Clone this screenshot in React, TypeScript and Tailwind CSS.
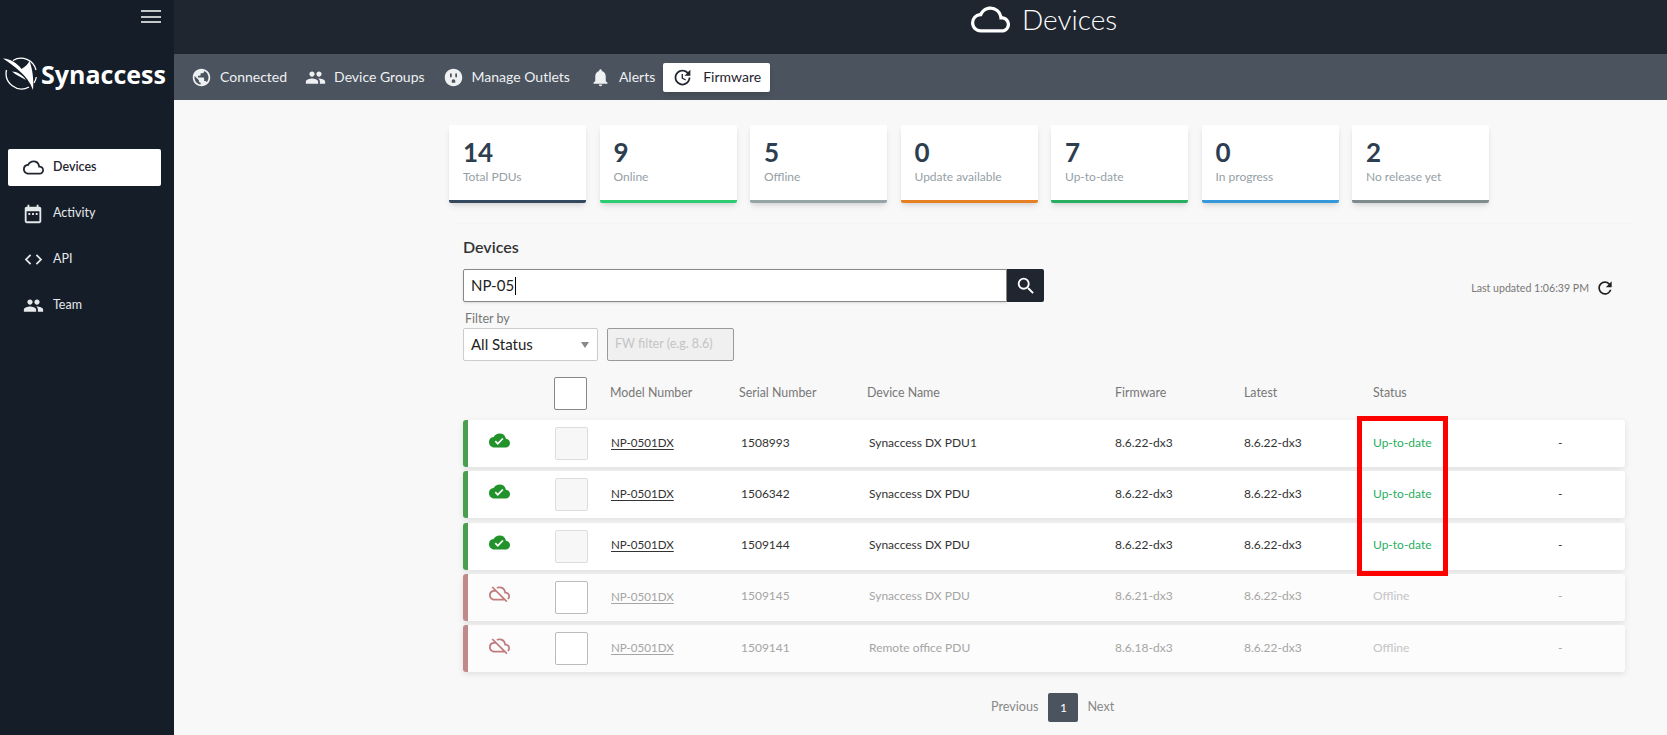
import {
  MdCloudDone,
  MdCloudQueue,
  MdCode,
  MdDateRange,
  MdNotifications,
  MdOutlet,
  MdOutlineCloudOff,
  MdPeople,
  MdPublic,
  MdRefresh,
  MdSearch,
  MdUpdate,
} from "react-icons/md";

const STATS = [
  { value: "14", label: "Total PDUs", bar: "border-[#34495e]" },
  { value: "9", label: "Online", bar: "border-[#2ecc71]" },
  { value: "5", label: "Offline", bar: "border-[#95a5a6]" },
  { value: "0", label: "Update available", bar: "border-[#e67e22]" },
  { value: "7", label: "Up-to-date", bar: "border-[#27ae60]" },
  { value: "0", label: "In progress", bar: "border-[#3498db]" },
  { value: "2", label: "No release yet", bar: "border-[#7f8c8d]" },
];

const ROWS = [
  { serial: "1508993", name: "Synaccess DX PDU1", fw: "8.6.22-dx3", online: true },
  { serial: "1506342", name: "Synaccess DX PDU", fw: "8.6.22-dx3", online: true },
  { serial: "1509144", name: "Synaccess DX PDU", fw: "8.6.22-dx3", online: true },
  { serial: "1509145", name: "Synaccess DX PDU", fw: "8.6.21-dx3", online: false },
  { serial: "1509141", name: "Remote office PDU", fw: "8.6.18-dx3", online: false },
];

function Logo() {
  return (
    <svg width="36" height="36" viewBox="0 0 36 36" className="shrink-0">
      <path d="M10 4.500A15.500 15.500 0 0 1 33 14" fill="none" stroke="#fff" strokeWidth="1.300" />
      <path d="M33.300 21A15.500 15.500 0 0 1 31 27" fill="none" stroke="#fff" strokeWidth="1.300" />
      <path d="M26 31A15.500 15.500 0 0 1 3.500 14" fill="none" stroke="#fff" strokeWidth="1.300" />
      <path d="M0 2.500C8 3 14 7 18.500 13C22 11 25 8 26.500 5C29.500 13 31 24 30 34C27 26 22.500 20 17 15.500C12 11 6 6 0 2.500Z" fill="#fff" />
      <path d="M9 15.500C14 15.500 19 18.500 23 24C18 21 13 19 9 15.500Z" fill="#fff" />
    </svg>
  );
}

function SideItem({ icon, label, active }: { icon: React.ReactNode; label: string; active?: boolean }) {
  return (
    <div
      className={`flex h-[37px] items-center rounded-[2px] pl-[5px] text-[12.500px] ${
        active ? "bg-white font-semibold text-[#1f2630]" : "text-[#e6e9ec]"
      }`}
    >
      <span className="flex w-[40px] justify-center">{icon}</span>
      <span>{label}</span>
    </div>
  );
}

function Tab({ icon, label, active }: { icon: React.ReactNode; label: string; active?: boolean }) {
  return (
    <div
      className={`flex h-[29px] items-center rounded-[2px] ${
        active ? "bg-white pl-[9px] pr-[9px] text-[#1f2630] shadow-md" : "text-[#eef0f2]"
      }`}
    >
      {icon}
      <span className={`-mt-[1px] ${active ? "ml-[10px]" : "ml-[8px]"}`}>{label}</span>
    </div>
  );
}

function Checkbox({ className }: { className: string }) {
  return <div className={`h-[33px] w-[33px] rounded-[2px] border ${className}`} />;
}

export default function App() {
  return (
    <div className="flex h-[735px] w-[1667px] overflow-hidden bg-[#f8f8f8] font-['Lato','Noto_Sans',sans-serif]">
      {/* Sidebar */}
      <aside className="flex w-[174px] shrink-0 flex-col bg-[#151d28]">
        <div className="flex justify-end pr-[13px] pt-[10px]">
          <div className="flex w-[20px] flex-col gap-[3.500px]">
            <div className="h-[2px] bg-[#c4c7ca]" />
            <div className="h-[2px] bg-[#c4c7ca]" />
            <div className="h-[2px] bg-[#c4c7ca]" />
          </div>
        </div>
        <div className="mt-[33px] flex items-center pl-[3px]">
          <Logo />
          <span className="ml-[2px] font-['Open_Sans',sans-serif] text-[25px] font-bold leading-[32px] text-white">
            Synaccess
          </span>
        </div>
        <nav className="mt-[57px] flex flex-col gap-[9px] pl-[8px] pr-[13px]">
          <SideItem active icon={<MdCloudQueue size={21} />} label="Devices" />
          <SideItem icon={<MdDateRange size={22} />} label="Activity" />
          <SideItem icon={<MdCode size={21} />} label="API" />
          <SideItem icon={<MdPeople size={21} />} label="Team" />
        </nav>
      </aside>

      <div className="flex min-w-0 flex-1 flex-col">
        {/* Title bar */}
        <header className="flex h-[54px] shrink-0 items-start bg-[#1f2630] pl-[797px] text-white">
          <MdCloudQueue size={39} />
          <span className="ml-[12px] text-[28px] font-light leading-[38px]">Devices</span>
        </header>

        {/* Tabs */}
        <div className="flex h-[46px] shrink-0 items-center gap-[18px] bg-[#4a535e] pl-[17px] text-[14px]">
          <Tab icon={<MdPublic size={21} />} label="Connected" />
          <Tab icon={<MdPeople size={21} />} label="Device Groups" />
          <Tab icon={<MdOutlet size={21} />} label="Manage Outlets" />
          <div className="ml-[2px]">
            <Tab icon={<MdNotifications size={21} />} label="Alerts" />
          </div>
          <div className="-ml-[10px]">
            <Tab active icon={<MdUpdate size={21} />} label="Firmware" />
          </div>
        </div>

        <main className="flex-1 pl-[275px] pt-[25px]">
          {/* Stat cards */}
          <div className="flex gap-[13.500px]">
            {STATS.map((s) => (
              <div
                key={s.label}
                className={`h-[78px] w-[137px] rounded-[2px] border-b-[3px] bg-white pl-[14px] pt-[11px] shadow-md ${s.bar}`}
              >
                <div className="text-[26px] font-bold leading-[32px] text-[#2c3e50]">{s.value}</div>
                <div className="mt-[1px] text-[12px] leading-[16px] text-[#95a0a6]">{s.label}</div>
              </div>
            ))}
          </div>

          <section className="mt-[20px] w-[1189px] rounded-t-[8px] border-t border-[#f5f5f5] pl-[14px] pt-[12px]">
            <h2 className="text-[16px] font-semibold leading-[22px] text-[#333]">Devices</h2>

            <div className="mt-[11px] flex w-[1162px] items-start justify-between">
              <div className="flex">
                <div className="flex h-[33px] w-[544px] items-center rounded-l-[2px] border border-[#888] bg-white pl-[7px] text-[15px] text-[#222] shadow-sm">
                  NP-05
                  <span className="ml-[1px] h-[18px] w-px bg-black" />
                </div>
                <div className="flex h-[33px] w-[37px] items-center justify-center rounded-r-[2px] bg-[#1f2630] text-white">
                  <MdSearch size={22} />
                </div>
              </div>
              <div className="mr-[10px] mt-[11px] flex items-center text-[10.600px] text-[#777]">
                Last updated 1:06:39 PM
                <MdRefresh size={20} className="-mt-[2px] ml-[6px] text-[#222]" />
              </div>
            </div>

            <div className="ml-[2px] mt-[8px] text-[12.500px] leading-[17px] text-[#777]">Filter by</div>
            <div className="mt-[1px] flex gap-[9px]">
              <div className="flex h-[33px] w-[135px] items-center justify-between rounded-[2px] border border-[#ccc] bg-white pl-[7px] pr-[8px] text-[15px] text-[#222]">
                All Status
                <span className="h-0 w-0 border-x-[4px] border-t-[6px] border-x-transparent border-t-[#888]" />
              </div>
              <div className="flex h-[33px] w-[127px] items-center rounded-[2px] border border-[#999] bg-[#f0f0f0] pl-[7px] text-[12.500px] text-[#c4c4c4]">
                FW filter (e.g. 8.6)
              </div>
            </div>

            {/* Table */}
            <div className="relative mt-[16px] w-[1162px]">
              <div className="grid h-[33px] grid-cols-[91px_56px_129px_128px_248px_129px_129px_1fr] items-center text-[12.400px] text-[#777]">
                <span />
                <Checkbox className="border-[#888] bg-white" />
                <span>Model Number</span>
                <span>Serial Number</span>
                <span>Device Name</span>
                <span>Firmware</span>
                <span>Latest</span>
                <span>Status</span>
              </div>

              <div className="mt-[10px] flex flex-col gap-[4.300px]">
                {ROWS.map((r) => (
                  <div
                    key={r.serial}
                    className={`grid h-[47px] grid-cols-[21px_66px_56px_130px_128px_246px_129px_129px_185px_1fr] items-center rounded-[3px] border-l-[5px] pb-[2px] text-[12px] shadow-[0_2px_6px_rgba(0,0,0,0.1)] ${
                      r.online ? "border-[#4a9f4f] bg-white text-[#333]" : "border-[#c08a8a] bg-[#fcfcfc] text-[#a5a5a5]"
                    }`}
                  >
                    <span />
                    <span className="-mt-[5px]">
                      {r.online ? (
                        <MdCloudDone size={21} className="text-[#22922a]" />
                      ) : (
                        <MdOutlineCloudOff size={21} className="text-[#c07c7c]" />
                      )}
                    </span>
                    <div className="mt-[2px]">
                      <Checkbox className={r.online ? "border-[#ddd] bg-[#f7f7f7]" : "border-[#bbb] bg-white"} />
                    </div>
                    <span className="text-[11.600px] underline underline-offset-2">NP-0501DX</span>
                    <span>{r.serial}</span>
                    <span>{r.name}</span>
                    <span>{r.fw}</span>
                    <span>8.6.22-dx3</span>
                    <span className={r.online ? "text-[#27ae60]" : "text-[#c4c4c4]"}>
                      {r.online ? "Up-to-date" : "Offline"}
                    </span>
                    <span>-</span>
                  </div>
                ))}
              </div>

              {/* red annotation box */}
              <div className="pointer-events-none absolute left-[894px] top-[39px] h-[160px] w-[91px] border-[5px] border-[#ff0000]" />

              <div className="mt-[21px] flex h-[29px] items-center text-[12.600px] text-[#888]">
                <span className="ml-[528px]">Previous</span>
                <span className="ml-[10px] flex h-[29px] w-[30px] items-center justify-center rounded-[2px] bg-[#4a535e] text-[12px] text-white">
                  1
                </span>
                <span className="ml-[9px]">Next</span>
              </div>
            </div>
          </section>
        </main>
      </div>
    </div>
  );
}
